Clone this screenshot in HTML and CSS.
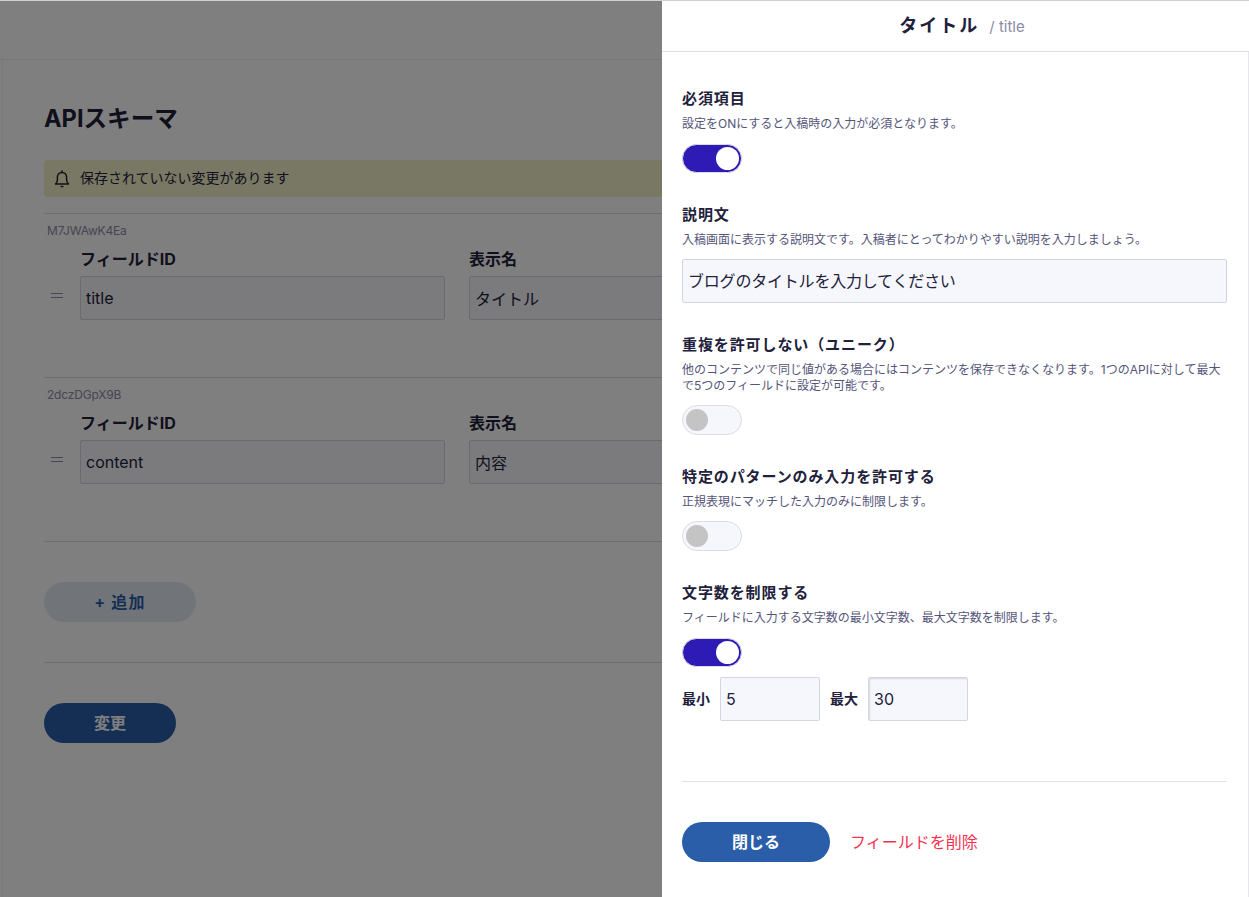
FILE: index.html
```html
<!DOCTYPE html>
<html lang="ja">
<head>
    <meta charset="UTF-8">
    <meta name="viewport" content="width=device-width, initial-scale=1.0">
    <title>APIスキーマ</title>
    <link rel="stylesheet" href="styles.css">
</head>
<body>
    <div class="app">
        <header class="top-bar"></header>
        <main class="main">
            <h1 class="page-title">APIスキーマ</h1>
            <div class="notice">
                <svg class="notice-icon" width="16" height="18" viewBox="0 0 16 18" fill="none" stroke="#20202c" stroke-width="1.5" stroke-linejoin="round" stroke-linecap="round">
                    <path d="M1.5 14h13c-1.3-1.2-1.9-2.4-1.9-4.3V7.2C12.6 4.4 10.6 2.4 8 2.4S3.4 4.4 3.4 7.2v2.5c0 1.9-.6 3.1-1.9 4.3z"/>
                    <path d="M8 1v1.4"/>
                    <path d="M7.2 16.6h1.6"/>
                </svg>
                <span class="notice-text">保存されていない変更があります</span>
            </div>

            <section class="field">
                <p class="field-id">M7JWAwK4Ea</p>
                <div class="field-row">
                    <span class="handle"></span>
                    <div class="col">
                        <label class="col-label">フィールドID</label>
                        <input class="text-input" type="text" value="title">
                    </div>
                    <div class="col">
                        <label class="col-label">表示名</label>
                        <input class="text-input" type="text" value="タイトル">
                    </div>
                </div>
            </section>

            <section class="field">
                <p class="field-id">2dczDGpX9B</p>
                <div class="field-row">
                    <span class="handle"></span>
                    <div class="col">
                        <label class="col-label">フィールドID</label>
                        <input class="text-input" type="text" value="content">
                    </div>
                    <div class="col">
                        <label class="col-label">表示名</label>
                        <input class="text-input" type="text" value="内容">
                    </div>
                </div>
            </section>

            <div class="add-area">
                <button class="add-btn">+ 追加</button>
            </div>
            <div class="save-area">
                <button class="save-btn">変更</button>
            </div>
        </main>

        <div class="overlay"></div>

        <aside class="panel">
            <div class="panel-head">
                <h2 class="panel-title">タイトル</h2>
                <span class="panel-sub">/ title</span>
            </div>
            <div class="panel-body">
                <section class="option">
                    <h3>必須項目</h3>
                    <p>設定をONにすると入稿時の入力が必須となります。</p>
                    <span class="toggle on"></span>
                </section>

                <section class="option">
                    <h3>説明文</h3>
                    <p>入稿画面に表示する説明文です。入稿者にとってわかりやすい説明を入力しましょう。</p>
                    <input class="panel-input" type="text" value="ブログのタイトルを入力してください">
                </section>

                <section class="option">
                    <h3>重複を許可しない（ユニーク）</h3>
                    <p>他のコンテンツで同じ値がある場合にはコンテンツを保存できなくなります。1つのAPIに対して最大で5つのフィールドに設定が可能です。</p>
                    <span class="toggle"></span>
                </section>

                <section class="option">
                    <h3>特定のパターンのみ入力を許可する</h3>
                    <p>正規表現にマッチした入力のみに制限します。</p>
                    <span class="toggle"></span>
                </section>

                <section class="option">
                    <h3>文字数を制限する</h3>
                    <p>フィールドに入力する文字数の最小文字数、最大文字数を制限します。</p>
                    <span class="toggle on"></span>
                    <div class="limits">
                        <label>最小</label>
                        <input class="limit-input" type="text" value="5">
                        <label class="limit-max">最大</label>
                        <input class="limit-input" type="text" value="30">
                    </div>
                </section>

                <div class="panel-foot">
                    <button class="close-btn">閉じる</button>
                    <a class="delete-link" href="#">フィールドを削除</a>
                </div>
            </div>
        </aside>
    </div>
</body>
</html>
```

FILE: styles.css
```css
* {
    margin: 0;
    padding: 0;
    box-sizing: border-box;
    font-family: 'Inter', 'Noto Sans CJK JP', sans-serif;
}

html, body {
    height: 100%;
}

body {
    background-color: #ffffff;
    color: #21213b;
    overflow: hidden;
    border-top: 1px solid #d0d0d0;
}

.app {
    position: relative;
    height: 896px;
    overflow: hidden;
}

.top-bar {
    height: 59px;
    border-bottom: 1px solid #f0f0f4;
}

.main {
    margin-left: 2px;
    height: 837px;
    padding: 41px 0 0 41px;
    border-left: 1px solid #f0f0f4;
    width: 1247px;
}

.page-title {
    font-size: 23.6px;
    line-height: 36px;
    font-weight: 700;
}

.notice {
    display: flex;
    align-items: center;
    gap: 10px;
    height: 37px;
    margin-top: 23px;
    padding-left: 10px;
    border-radius: 4px;
    background-color: #f3f1c9;
    font-size: 14px;
}

.notice-icon {
    flex: none;
}

.notice-text {
    margin-bottom: 3px;
}

.field {
    margin-top: 16px;
    height: 164px;
    border-top: 1px solid #dadae6;
    padding: 9px 0 0 3px;
}

.field + .field {
    margin-top: 0;
}

.field-id {
    font-size: 12px;
    line-height: 16px;
    letter-spacing: -0.2px;
    color: #8b8ba6;
}

.field-row {
    display: flex;
    align-items: flex-end;
    gap: 24px;
    margin-top: 8px;
}

.handle {
    width: 12px;
    height: 5px;
    margin: 0 -15px 22px 4px;
    border-top: 1px solid #8b8ba6;
    border-bottom: 1px solid #8b8ba6;
}

.col {
    width: 365px;
}

.col + .col {
    width: 400px;
}

.handle + .col {
    margin-left: 8px;
}

.col-label {
    display: block;
    font-size: 16px;
    line-height: 24px;
    font-weight: 700;
    margin-bottom: 5px;
}

.text-input {
    display: block;
    width: 100%;
    height: 44px;
    padding: 0 5px 1px;
    border: 1px solid #d5d5e2;
    border-radius: 2px;
    background-color: #f6f7fc;
    color: #21213b;
    font-size: 16px;
}

.add-area {
    height: 121px;
    padding-top: 40px;
    border-top: 1px solid #dadae6;
}

.add-btn {
    width: 152px;
    height: 40px;
    padding-bottom: 2px;
    border: none;
    border-radius: 20px;
    background-color: #e3eaf5;
    color: #2b5ea6;
    font-size: 16px;
    font-weight: 700;
    letter-spacing: 1.2px;
}

.save-area {
    padding-top: 40px;
    border-top: 1px solid #dadae6;
}

.save-btn {
    width: 132px;
    height: 40px;
    padding-bottom: 2px;
    border: none;
    border-radius: 20px;
    background-color: #2a5ea8;
    color: #ffffff;
    font-size: 16px;
    font-weight: 700;
}

.overlay {
    position: absolute;
    inset: 0;
    background: rgba(0, 0, 0, 0.5);
}

.panel {
    position: absolute;
    top: 0;
    right: 0;
    bottom: 0;
    width: 587px;
    background-color: #ffffff;
}

.panel-head {
    display: flex;
    align-items: center;
    justify-content: center;
    gap: 10px;
    height: 51px;
    padding-left: 13px;
    border-bottom: 1px solid #dcdce4;
}

.panel-title {
    font-size: 18px;
    line-height: 24px;
    font-weight: 700;
    letter-spacing: 2px;
}

.panel-sub {
    font-size: 15px;
    color: #8b8ba6;
}

.panel-body {
    height: 845px;
    padding: 37px 21px 0 20px;
    border-right: 1px solid #e6e6ec;
}

.option {
    margin-bottom: 32px;
}

.option h3 {
    font-size: 15px;
    line-height: 20px;
    font-weight: 700;
    letter-spacing: 0.9px;
}

.option p {
    margin-top: 7px;
    font-size: 12px;
    line-height: 16px;
    color: #55557a;
}

.toggle {
    display: block;
    position: relative;
    width: 60px;
    height: 30px;
    margin-top: 11px;
    border: 1px solid #dcdce4;
    border-radius: 15px;
    background-color: #f6f7fc;
}

.toggle::after {
    content: '';
    position: absolute;
    top: 3px;
    left: 3px;
    width: 22px;
    height: 22px;
    border-radius: 50%;
    background-color: #c4c4c4;
}

.toggle.on {
    height: 29px;
    margin-top: 12px;
    background-color: #2e1ab5;
}

.toggle.on::after {
    left: 33px;
    top: 2px;
    width: 23px;
    height: 23px;
    background-color: #ffffff;
}

.panel-input {
    display: block;
    width: 100%;
    height: 44px;
    margin-top: 11px;
    padding: 0 5px 2px;
    border: 1px solid #d5d5e2;
    border-radius: 2px;
    background-color: #f6f7fc;
    color: #21213b;
    font-size: 16px;
    letter-spacing: -0.2px;
}

.limits {
    display: flex;
    align-items: center;
    margin-top: 10px;
}

.limits label {
    width: 38px;
    padding-bottom: 3px;
    font-size: 14px;
    font-weight: 700;
}

.limits .limit-max {
    width: 38px;
    margin-left: 10px;
}

.limit-input {
    width: 100px;
    height: 44px;
    padding: 0 5px;
    border: 1px solid #d5d5e2;
    border-radius: 2px;
    background-color: #f6f7fc;
    color: #21213b;
    font-size: 16px;
}

.limit-max + .limit-input {
    box-shadow: inset 1px 1px 2px rgba(0, 0, 0, 0.12);
}

.panel-foot {
    display: flex;
    align-items: center;
    gap: 20px;
    margin-top: 60px;
    padding-top: 40px;
    border-top: 1px solid #e2e2ea;
}

.close-btn {
    width: 148px;
    height: 40px;
    padding-bottom: 3px;
    border: none;
    border-radius: 20px;
    background-color: #2a5ea8;
    color: #ffffff;
    font-size: 16px;
    font-weight: 700;
}

.delete-link {
    margin-bottom: 3px;
    color: #f4304f;
    font-size: 16px;
    text-decoration: none;
}
```
